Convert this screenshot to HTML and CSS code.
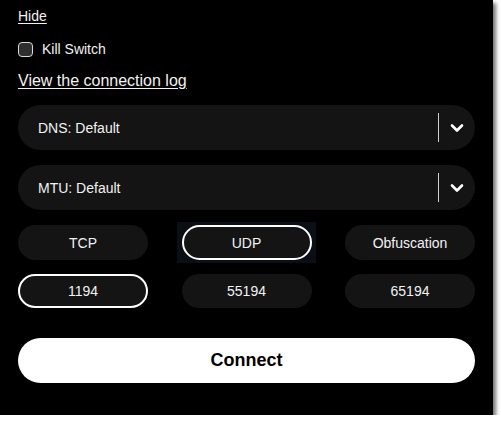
FILE: index.html
```html
<!DOCTYPE html>
<html lang="en">
<head>
    <meta charset="UTF-8">
    <meta name="viewport" content="width=device-width, initial-scale=1.0">
    <title>VPN settings</title>
    <link rel="stylesheet" href="styles.css">
</head>
<body>
    <div class="panel">
        <a class="link link-small" href="#">Hide</a>

        <label class="check-row">
            <span class="check-box"></span>
            <span>Kill Switch</span>
        </label>

        <a class="link link-log" href="#">View the connection log</a>

        <div class="select">
            <span class="select-label">DNS: Default</span>
            <span class="select-sep"></span>
            <svg class="chevron" width="14" height="10" viewBox="0 0 14 10">
                <polyline points="2,2.5 7,7.5 12,2.5" fill="none" stroke="#fff" stroke-width="2.6" stroke-linecap="round" stroke-linejoin="round"/>
            </svg>
        </div>

        <div class="select">
            <span class="select-label">MTU: Default</span>
            <span class="select-sep"></span>
            <svg class="chevron" width="14" height="10" viewBox="0 0 14 10">
                <polyline points="2,2.5 7,7.5 12,2.5" fill="none" stroke="#fff" stroke-width="2.6" stroke-linecap="round" stroke-linejoin="round"/>
            </svg>
        </div>

        <div class="options">
            <button class="opt">TCP</button>
            <button class="opt active focused">UDP</button>
            <button class="opt">Obfuscation</button>
        </div>

        <div class="options options-ports">
            <button class="opt active">1194</button>
            <button class="opt">55194</button>
            <button class="opt">65194</button>
        </div>

        <button class="connect">Connect</button>
    </div>
</body>
</html>
```

FILE: styles.css
```css
body {
    margin: 0;
    background-color: #ffffff;
    font-family: "Liberation Sans", Arial, sans-serif;
}

/* 검은 패널 */
.panel {
    display: flex;
    flex-direction: column;
    align-items: flex-start;
    width: 493px;
    height: 415px;
    box-sizing: border-box;
    padding: 8px 18px 0 18px;
    background-color: #000000;
    color: #f2f2f2;
    box-shadow: 3px 3px 4px rgba(0, 0, 0, 0.55);
}

.link {
    color: #f2f2f2;
    text-decoration: underline;
    text-underline-offset: 2px;
}

.link-small {
    font-size: 14px;
    line-height: 16px;
}

.check-row {
    display: flex;
    align-items: center;
    gap: 9px;
    margin-top: 18px;
    height: 15px;
    font-size: 14px;
    line-height: 15px;
}

.check-box {
    width: 13px;
    height: 13px;
    border: 1px solid #d8d8d8;
    border-radius: 4px;
    background-color: #2e2e2e;
}

.link-log {
    margin-top: 15px;
    font-size: 16px;
    line-height: 18px;
}

/* 드롭다운 */
.select {
    display: flex;
    align-items: center;
    align-self: stretch;
    height: 45px;
    margin-top: 15px;
    padding: 0 11px 0 20px;
    border-radius: 23px;
    background-color: #141414;
    font-size: 14px;
}

.select-label {
    flex: 1;
}

.select-sep {
    width: 1px;
    height: 29px;
    background-color: #cfcfcf;
    margin-right: 11px;
}

.chevron {
    display: block;
}

/* 프로토콜 / 포트 버튼 */
.options {
    position: relative;
    z-index: 0;
    display: grid;
    grid-template-columns: repeat(3, 130px);
    justify-content: space-between;
    align-self: stretch;
    margin-top: 15px;
}

.options-ports {
    margin-top: 14px;
}

.opt {
    position: relative;
    height: 35px;
    border: 2px solid transparent;
    border-radius: 18px;
    background-color: #141414;
    color: #f2f2f2;
    font-family: inherit;
    font-size: 14px;
}

.options-ports .opt {
    height: 34px;
}

.opt.active {
    border-color: #ffffff;
}

/* 포커스 표시 */
.opt.focused::before {
    content: "";
    position: absolute;
    inset: -5px -6px -5px -7px;
    background-color: #0a0f16;
    z-index: -1;
}

.connect {
    align-self: stretch;
    height: 45px;
    margin-top: 30px;
    border: none;
    border-radius: 23px;
    background-color: #ffffff;
    color: #000000;
    font-family: inherit;
    font-size: 18px;
    font-weight: bold;
}
```
